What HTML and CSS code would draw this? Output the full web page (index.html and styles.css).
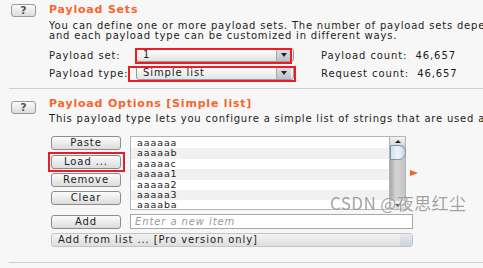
FILE: index.html
```html
<!DOCTYPE html>
<html>
<head>
<meta charset="utf-8">
<link rel="stylesheet" href="styles.css">
</head>
<body>
<div class="page">
  <div class="sec sec1">
    <div class="help">?</div>
    <div class="body">
      <div class="title">Payload Sets</div>
      <div class="desc">You can define one or more payload sets. The number of payload sets depends on the attack type<br>and each payload type can be customized in different ways.</div>
      <div class="row row1">
        <span class="lbl">Payload set:</span>
        <div class="sel"><span class="val">1</span><span class="arr"><i></i></span><span class="mark mark1"></span></div>
        <span class="count">Payload count:&nbsp; 46,657</span>
      </div>
      <div class="row row2">
        <span class="lbl">Payload type:</span>
        <div class="sel"><span class="val">Simple list</span><span class="arr"><i></i></span><span class="mark mark2"></span></div>
        <span class="count">Request count:&nbsp; 46,657</span>
      </div>
    </div>
  </div>
  <div class="sep"></div>
  <div class="sec sec2">
    <div class="help">?</div>
    <div class="body">
      <div class="title">Payload Options [Simple list]</div>
      <div class="desc">This payload type lets you configure a simple list of strings that are used as payloads.</div>
      <div class="opts">
        <div class="btns">
          <div class="btn">Paste</div>
          <div class="btn load">Load ...<span class="mark mark3"></span></div>
          <div class="btn">Remove</div>
          <div class="btn">Clear</div>
        </div>
        <div class="list">
          <div class="items">
            <div class="it">aaaaaa</div>
            <div class="it alt">aaaaab</div>
            <div class="it">aaaaac</div>
            <div class="it alt">aaaaa1</div>
            <div class="it">aaaaa2</div>
            <div class="it alt">aaaaa3</div>
            <div class="it">aaaaba</div>
          </div>
          <div class="sb">
            <div class="sb-btn up"><i></i></div>
            <div class="sb-track"><div class="thumb"></div></div>
            <div class="sb-btn down"><i></i></div>
          </div>
        </div>
        <div class="pointer"></div>
      </div>
      <div class="addrow">
        <div class="btn">Add</div>
        <div class="input">Enter a new item</div>
      </div>
      <div class="combo"><span>Add from list ... [Pro version only]</span><span class="carr"></span></div>
    </div>
  </div>
  <div class="sep sep2"></div>
  <div class="wm">CSDN @夜思红尘</div>
</div>
</body>
</html>
```
FILE: styles.css
```css
html, body {
  margin: 0;
  padding: 0;
}
body {
  background: #f7f7f7;
  font-family: "DejaVu Sans", sans-serif;
  font-size: 10px;
  color: #1c1c1c;
  letter-spacing: 0.9px;
}
.page {
  position: relative;
  width: 483px;
  height: 268px;
  overflow: hidden;
}
.sec {
  display: flex;
  padding-left: 11px;
}
.sec1 { padding-top: 4px; }
.sec2 { padding-top: 9px; }
.help {
  flex: none;
  width: 25px;
  height: 13px;
  box-sizing: border-box;
  border: 1px solid #9a9a9a;
  border-radius: 3px;
  background: linear-gradient(#fbfbfb, #dcdcdc);
  font-size: 11px;
  font-weight: bold;
  color: #555;
  line-height: 11px;
  text-align: center;
  letter-spacing: 0;
}
.sec2 .help { margin-top: 3px; }
.body {
  margin-left: 13px;
  flex: 1;
  min-width: 0;
}
.title {
  height: 12px;
  line-height: 12px;
  font-size: 11px;
  font-weight: bold;
  color: #f8652c;
  letter-spacing: 0.8px;
  white-space: nowrap;
}
.desc {
  margin-top: 5px;
  line-height: 10px;
  white-space: nowrap;
  letter-spacing: 0.8px;
}
.sec2 .desc { margin-top: 4px; }
.row {
  display: flex;
  align-items: center;
  height: 14px;
  white-space: nowrap;
}
.row1 { margin-top: 7px; }
.row2 { margin-top: 4px; }
.lbl {
  width: 87px;
  flex: none;
}
.sel {
  position: relative;
  flex: none;
  width: 158px;
  height: 14px;
  box-sizing: border-box;
  border: 1px solid #9b9b9b;
  border-radius: 3px;
  background: linear-gradient(#ffffff, #e3e3e3);
  display: flex;
  align-items: center;
}
.val {
  flex: 1;
  padding-left: 6px;
  line-height: 12px;
}
.arr {
  width: 14px;
  height: 12px;
  margin-right: 2px;
  border-left: 1px solid #a9a9a9;
  background: linear-gradient(#dfe4ea, #b9c0c8);
  display: flex;
  align-items: center;
  justify-content: center;
}
.arr i {
  width: 0;
  height: 0;
  border-left: 3px solid transparent;
  border-right: 3px solid transparent;
  border-top: 4px solid #222;
}
.mark {
  position: absolute;
  border: 2px solid #ec1c24;
  box-sizing: border-box;
  pointer-events: none;
}
.mark1 { top: -1px; left: -2px; width: 157px; height: 16px; }
.mark2 { top: -1px; left: -9px; width: 168px; height: 16px; }
.mark3 { top: -4px; left: -4px; width: 77px; height: 20px; }
.count {
  margin-left: 27px;
}
.sep {
  margin: 8px 0 0 9px;
  height: 1px;
  background: #cfcfcf;
}
.sep2 { margin-top: 15px; }
.opts {
  display: flex;
  margin-top: 12px;
  margin-left: 2px;
}
.btns {
  width: 70px;
  display: flex;
  flex-direction: column;
  gap: 4px;
}
.btn {
  position: relative;
  width: 70px;
  height: 14px;
  box-sizing: border-box;
  border: 1px solid #8d8d8d;
  border-radius: 3px;
  background: linear-gradient(#fcfcfc, #dcdcdc);
  text-align: center;
  line-height: 12px;
}
.load { margin-top: 1px; }
.list {
  margin-left: 9px;
  width: 276px;
  height: 74px;
  box-sizing: border-box;
  border: 1px solid #b5b5b5;
  background: #fff;
  display: flex;
}
.items {
  flex: 1;
  padding-top: 1px;
}
.it {
  height: 10.4px;
  line-height: 10px;
  padding-left: 6px;
  font-size: 9.5px;
  letter-spacing: 0.9px;
}
.it.alt { background: #f1f1f1; }
.sb {
  width: 15px;
  display: flex;
  flex-direction: column;
  border-left: 1px solid #b0b0b0;
  background: linear-gradient(90deg, #a8a8a8, #d4d4d4 40%, #c4c4c4);
}
.sb-btn {
  height: 8px;
  background: linear-gradient(#f4f4f4, #d8d8d8);
  display: flex;
  align-items: center;
  justify-content: center;
}
.sb-btn i {
  width: 0;
  height: 0;
  border-left: 3px solid transparent;
  border-right: 3px solid transparent;
}
.up i { border-bottom: 3px solid #222; }
.down i { border-top: 3px solid #222; }
.sb-track { flex: 1; position: relative; }
.thumb {
  margin-top: 0;
  height: 15px;
  border: 1px solid #7e93a8;
  border-radius: 0 8px 8px 0;
  background: linear-gradient(90deg, #cfe0ee, #eef5fb 50%, #c7d8e8);
  box-sizing: border-box;
  width: 16px;
}
.pointer {
  align-self: flex-start;
  margin-top: 34px;
  margin-left: 4px;
  width: 0;
  height: 0;
  border-top: 3px solid transparent;
  border-bottom: 3px solid transparent;
  border-left: 8px solid #f5602a;
}
.addrow {
  display: flex;
  align-items: flex-start;
  margin-top: 4px;
  margin-left: 2px;
}
.addrow .btn { margin-top: 1px; }
.input {
  margin-left: 9px;
  width: 283px;
  height: 15px;
  box-sizing: border-box;
  border: 1px solid #a8a8a8;
  background: #fff;
  color: #9a9a9a;
  font-style: italic;
  padding-left: 4px;
  line-height: 13px;
}
.combo {
  margin-top: 4px;
  margin-left: 2px;
  width: 362px;
  height: 14px;
  box-sizing: border-box;
  border: 1px solid #c4c4c4;
  border-radius: 3px;
  background: linear-gradient(#f3f3f3, #dedede);
  display: flex;
  align-items: center;
  padding-left: 6px;
  line-height: 12px;
  white-space: nowrap;
}
.combo span:first-child { flex: 1; }
.carr {
  width: 12px;
  height: 12px;
  background: linear-gradient(#e7eaee, #cdd3d9);
}
.wm {
  position: absolute;
  left: 330px;
  top: 190px;
  font-family: "Noto Sans CJK SC", sans-serif;
  font-size: 17px;
  letter-spacing: 0.4px;
  color: rgba(120, 120, 120, 0.7);
  text-shadow: 0 0 2px #fff;
  white-space: nowrap;
}
```
